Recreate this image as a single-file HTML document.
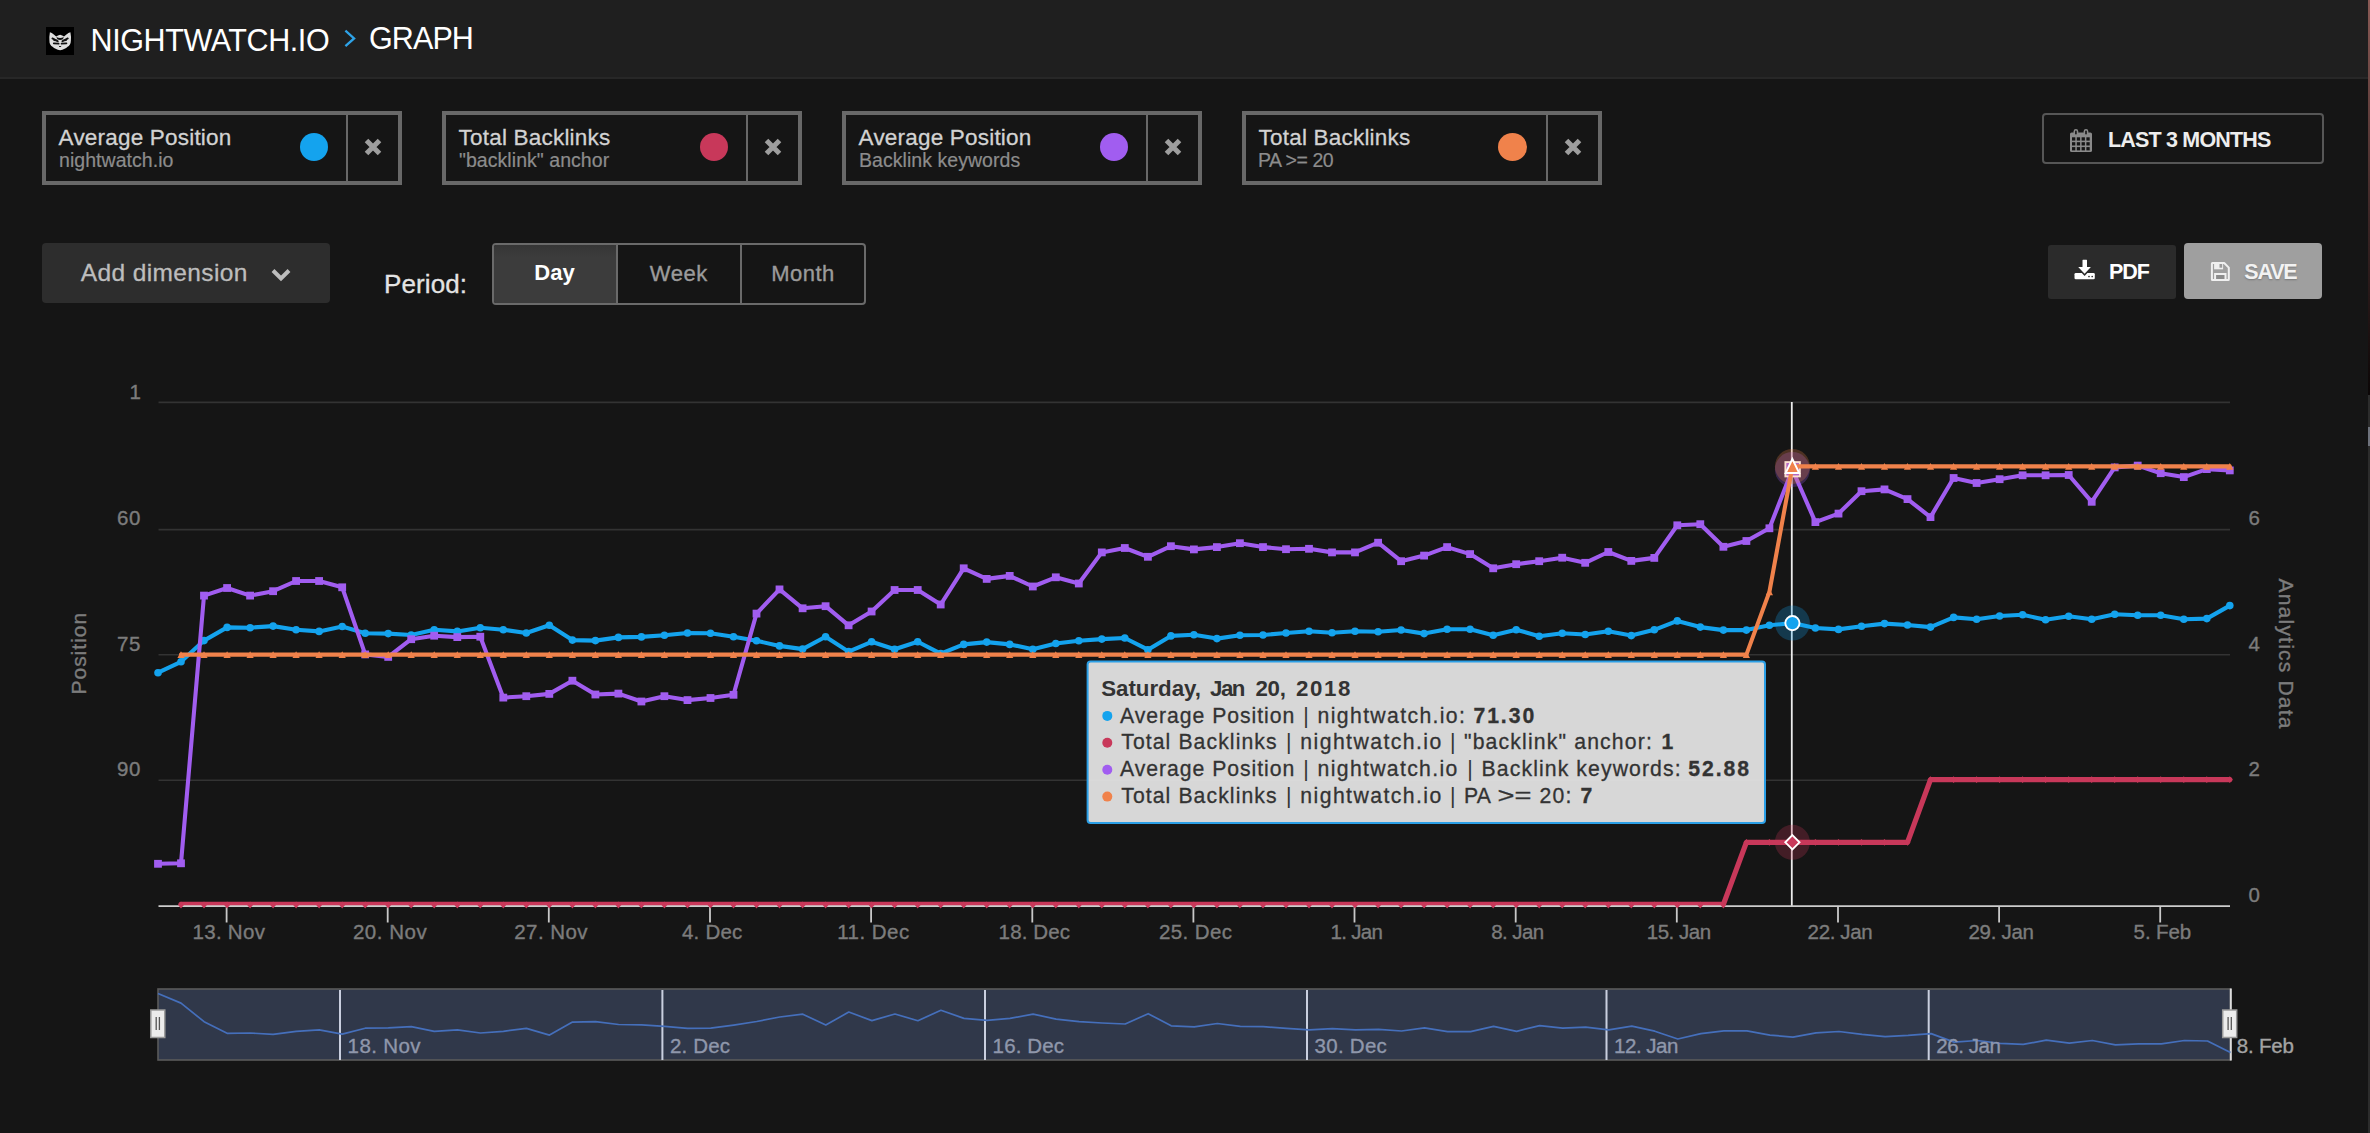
<!DOCTYPE html>
<html><head><meta charset="utf-8"><title>Nightwatch Graph</title>
<style>
html,body{margin:0;padding:0}
body{width:2370px;height:1133px;background:#151515;position:relative;overflow:hidden;font-family:"Liberation Sans",sans-serif;color:#fff}
.abs{position:absolute}
.hdr{left:0;top:0;width:2370px;height:77px;background:#1f1f1f;border-bottom:2px solid #272727}
.t{position:absolute;white-space:nowrap;line-height:1}
.pill{position:absolute;top:111px;width:352px;height:66px;border:4px solid #686868;background:#151515}
.pill .div{position:absolute;left:300px;top:0;width:2px;height:66px;background:#686868}
.pill .dot{position:absolute;left:254px;top:18px;width:28px;height:28px;border-radius:50%}
.pill .a{left:12.6px;top:12px;font-size:22.5px;color:#d2d2d2;letter-spacing:0.2px;-webkit-text-stroke:0.3px #d2d2d2}
.pill .b{left:13px;top:36px;font-size:19.5px;color:#8c8c8c;letter-spacing:0.05px;-webkit-text-stroke:0.2px #8c8c8c}
.pill svg{position:absolute;left:316.9px;top:22px}
</style></head><body>
<div class="abs hdr"></div>
<div class="abs" style="left:46px;top:27px;width:28px;height:28px;background:#000"></div>
<svg class="abs" style="left:46px;top:27px" width="28" height="28" viewBox="0 0 28 28"><path d="M3.9 5.2 Q5.8 5.6 7.8 7.4 L10.2 9.6 Q11.8 8 14.1 7.7 Q16.4 8 18 9.6 L20.4 7.4 Q22.4 5.6 24.4 5.2 Q25.3 9.5 24.9 13.6 Q24.9 16.2 23.8 17.7 Q22.9 19 21.6 19.8 Q20.2 21.2 18.6 21.8 Q16.4 23 14.1 23.3 Q11.8 23 9.6 21.8 Q8 21.2 6.6 19.8 Q5.3 19 4.4 17.7 Q3.3 16.2 3.4 13.6 Q3.1 9.5 3.9 5.2z" fill="#dedede"/><g fill="#111"><path d="M10.4 9.9 Q14.1 12 17.8 9.9 L16.9 12.3 Q14.1 13.7 11.3 12.3z"/></g><g stroke="#111" fill="none" stroke-linecap="round"><path d="M6.4 11.4 L11.8 14.3 M21.8 11.4 L16.4 14.3" stroke-width="1.8"/><path d="M8 13.2 L10.8 13.6 M20.2 13.2 L17.4 13.6" stroke-width="1.5"/><path d="M7.8 16.4 L12.6 16.7 M20.4 16.4 L15.6 16.7" stroke-width="1.8"/><path d="M13.3 19.2 L14.1 20 L14.9 19.2" stroke-width="1"/></g></svg>
<div class="t" id="t1" style="left:90.5px;top:24.5px;font-size:30.5px;letter-spacing:-0.4px">NIGHTWATCH.IO</div>
<svg class="abs" style="left:340px;top:26px" width="20" height="26" viewBox="0 0 20 26"><path d="M5.4 4.6 L14.1 12.4 L5.4 20.2" fill="none" stroke="#2ea3e8" stroke-width="2.3"/></svg>
<div class="t" id="t2" style="left:369px;top:23px;font-size:30.5px;letter-spacing:-0.9px">GRAPH</div>
<div class="pill" style="left:42px"><div class="t a">Average Position</div><div class="t b">nightwatch.io</div><div class="dot" style="background:#14a3ee"></div><div class="div"></div><svg width="20" height="20" viewBox="0 0 20 20"><path d="M3.5 3.5 L16.5 16.5 M16.5 3.5 L3.5 16.5" stroke="#9e9e9e" stroke-width="5" fill="none"/></svg></div>
<div class="pill" style="left:442px"><div class="t a">Total Backlinks</div><div class="t b">"backlink" anchor</div><div class="dot" style="background:#c8385a"></div><div class="div"></div><svg width="20" height="20" viewBox="0 0 20 20"><path d="M3.5 3.5 L16.5 16.5 M16.5 3.5 L3.5 16.5" stroke="#9e9e9e" stroke-width="5" fill="none"/></svg></div>
<div class="pill" style="left:842px"><div class="t a">Average Position</div><div class="t b">Backlink keywords</div><div class="dot" style="background:#a15df0"></div><div class="div"></div><svg width="20" height="20" viewBox="0 0 20 20"><path d="M3.5 3.5 L16.5 16.5 M16.5 3.5 L3.5 16.5" stroke="#9e9e9e" stroke-width="5" fill="none"/></svg></div>
<div class="pill" style="left:1242px"><div class="t a">Total Backlinks</div><div class="t b" style="letter-spacing:-0.45px;left:12px">PA &gt;= 20</div><div class="dot" style="background:#f0824b;left:252.3px;width:29px"></div><div class="div"></div><svg width="20" height="20" viewBox="0 0 20 20"><path d="M3.5 3.5 L16.5 16.5 M16.5 3.5 L3.5 16.5" stroke="#9e9e9e" stroke-width="5" fill="none"/></svg></div>

<div class="abs" style="left:2042px;top:113px;width:278px;height:47px;border:2px solid #565656;border-radius:4px"></div>
<svg class="abs" style="left:2069px;top:128px" width="24" height="26" viewBox="0 0 24 26"><rect x="1" y="4.4" width="22" height="19.6" rx="1.6" fill="#8a8a8a"/><rect x="4.6" y="1" width="4.6" height="6.6" rx="2.2" fill="#8a8a8a"/><rect x="14.7" y="1" width="4.6" height="6.6" rx="2.2" fill="#8a8a8a"/><g fill="#151515"><rect x="6.1" y="2.6" width="1.6" height="4" rx="0.8"/><rect x="16.2" y="2.6" width="1.6" height="4" rx="0.8"/><rect x="3.0" y="9.3" width="3.3" height="3.3"/><rect x="7.8" y="9.3" width="3.3" height="3.3"/><rect x="12.6" y="9.3" width="3.3" height="3.3"/><rect x="17.4" y="9.3" width="3.3" height="3.3"/><rect x="3.0" y="14.2" width="3.3" height="3.3"/><rect x="7.8" y="14.2" width="3.3" height="3.3"/><rect x="12.6" y="14.2" width="3.3" height="3.3"/><rect x="17.4" y="14.2" width="3.3" height="3.3"/><rect x="3.0" y="19.1" width="3.3" height="3.3"/><rect x="7.8" y="19.1" width="3.3" height="3.3"/><rect x="12.6" y="19.1" width="3.3" height="3.3"/><rect x="17.4" y="19.1" width="3.3" height="3.3"/></g></svg>
<div class="t" id="t3" style="left:2108px;top:130.3px;font-size:21.5px;font-weight:bold;color:#ededed;letter-spacing:-0.82px">LAST 3 MONTHS</div>

<div class="abs" style="left:42px;top:243px;width:288px;height:60px;background:#2d2d2d;border-radius:4px"></div>
<div class="t" id="t4" style="left:80.8px;top:260.8px;font-size:24.5px;color:#bdbdbd;letter-spacing:0.38px;-webkit-text-stroke:0.3px #bdbdbd">Add dimension</div>
<svg class="abs" style="left:268px;top:264px" width="26" height="22" viewBox="0 0 26 22"><path d="M5 6.5 L13 14.5 L21 6.5" fill="none" stroke="#bdbdbd" stroke-width="4"/></svg>
<div class="t" id="t5" style="left:384px;top:270.5px;font-size:26px;color:#e3e3e3;letter-spacing:0.1px;-webkit-text-stroke:0.3px #e3e3e3">Period:</div>

<div class="abs" style="left:492px;top:243px;width:370px;height:58px;border:2px solid #6a6a6a;border-radius:4px;background:#151515"></div>
<div class="abs" style="left:494px;top:245px;width:122px;height:58px;background:linear-gradient(#353535,#3c3c3c 12px,#3c3c3c);border-radius:2px 0 0 2px"></div>
<div class="abs" style="left:616px;top:245px;width:2px;height:58px;background:#6a6a6a"></div>
<div class="abs" style="left:740px;top:245px;width:2px;height:58px;background:#6a6a6a"></div>
<div class="t" id="t6" style="left:534.3px;top:262.4px;font-size:22px;font-weight:bold;color:#fff;letter-spacing:0.1px">Day</div>
<div class="t" id="t7" style="left:649.8px;top:263px;font-size:22px;color:#9b9b9b;letter-spacing:0.5px;-webkit-text-stroke:0.35px #9b9b9b">Week</div>
<div class="t" id="t8" style="left:771.3px;top:263px;font-size:22px;color:#9b9b9b;letter-spacing:0.45px;-webkit-text-stroke:0.35px #9b9b9b">Month</div>

<div class="abs" style="left:2048px;top:245px;width:127.5px;height:53.5px;background:#2b2b2b;border-radius:3px"></div>
<svg class="abs" style="left:2073px;top:258px" width="24" height="24" viewBox="0 0 24 24"><rect x="1.5" y="15" width="20.3" height="6.3" rx="1.3" fill="#fff"/><path d="M9.1 2.2 h5.3 v6.9 h3.7 l-6.5 6.9 l-6.6 -6.9 h4.1z" fill="#fff" stroke="#2b2b2b" stroke-width="2.6" stroke-linejoin="miter"/><path d="M9.5 2.2 q0 -0.4 0.4 -0.4 h3.7 q0.4 0 0.4 0.4 v6.9 h3.9 l-6.3 6.7 l-6.4 -6.7 h4.3z" fill="#fff"/><circle cx="16" cy="18.5" r="0.85" fill="#2b2b2b"/><circle cx="19.2" cy="18.5" r="0.85" fill="#2b2b2b"/></svg>
<div class="t" id="t9" style="left:2109px;top:261.7px;font-size:21.5px;font-weight:bold;color:#fff;letter-spacing:-1.1px">PDF</div>

<div class="abs" style="left:2184px;top:243px;width:138px;height:56px;background:#9f9f9f;border-radius:4px"></div>
<svg class="abs" style="left:2209px;top:261px" width="22" height="21" viewBox="0 0 22 21"><path d="M3.4 2 H15.2 L19.8 6.6 V18.5 Q19.8 19 19.3 19 H3.4 Q2.9 19 2.9 18.5 V2.5 Q2.9 2 3.4 2z" fill="none" stroke="#f0f0f0" stroke-width="2" stroke-linejoin="round"/><rect x="5.1" y="2" width="9" height="6.3" fill="#f0f0f0"/><rect x="10.5" y="3" width="2.7" height="3.7" fill="#9a9a9a"/><rect x="6.1" y="13" width="10.4" height="6" fill="#8c8c8c" stroke="#f0f0f0" stroke-width="2"/></svg>
<div class="t" id="t10" style="left:2244.3px;top:261.7px;font-size:21.5px;font-weight:bold;color:#f2f2f2;letter-spacing:-1.2px;text-shadow:0 1px 2px rgba(0,0,0,.25)">SAVE</div>

<div class="abs" style="left:2368px;top:0;width:2px;height:395px;background:linear-gradient(#8a5a55,#3d2626 55%,#0b0606)"></div>
<div class="abs" style="left:2368px;top:395px;width:2px;height:738px;background:#2c2c2c"></div>
<div class="abs" style="left:2368px;top:427px;width:2px;height:19px;background:#6e727c"></div>
<svg width="2370" height="793" viewBox="0 340 2370 793" style="position:absolute;left:0;top:340px" font-family="Liberation Sans, sans-serif">
<path d="M158.5 402.4 H2230" stroke="#333" stroke-width="1.6" fill="none"/>
<path d="M158.5 529.6 H2230" stroke="#333" stroke-width="1.6" fill="none"/>
<path d="M158.5 654.8 H2230" stroke="#333" stroke-width="1.6" fill="none"/>
<path d="M158.5 780.2 H2230" stroke="#333" stroke-width="1.6" fill="none"/>
<path d="M226.6 906 v16.5 M387.7 906 v16.5 M548.8 906 v16.5 M710.0 906 v16.5 M871.1 906 v16.5 M1032.3 906 v16.5 M1193.4 906 v16.5 M1354.5 906 v16.5 M1515.7 906 v16.5 M1676.8 906 v16.5 M1838.0 906 v16.5 M1999.1 906 v16.5 M2160.2 906 v16.5" stroke="#c8c8c8" stroke-width="1.8" fill="none"/>
<text x="192.5" y="939" font-size="20.5" fill="#7c7c7c" stroke="#7c7c7c" stroke-width="0.35" textLength="72.4" lengthAdjust="spacing">13. Nov</text>
<text x="352.9" y="939" font-size="20.5" fill="#7c7c7c" stroke="#7c7c7c" stroke-width="0.35" textLength="73.8" lengthAdjust="spacing">20. Nov</text>
<text x="514.2" y="939" font-size="20.5" fill="#7c7c7c" stroke="#7c7c7c" stroke-width="0.35" textLength="73.4" lengthAdjust="spacing">27. Nov</text>
<text x="681.9" y="939" font-size="20.5" fill="#7c7c7c" stroke="#7c7c7c" stroke-width="0.35" textLength="60.4" lengthAdjust="spacing">4. Dec</text>
<text x="837.2" y="939" font-size="20.5" fill="#7c7c7c" stroke="#7c7c7c" stroke-width="0.35" textLength="72.0" lengthAdjust="spacing">11. Dec</text>
<text x="998.6" y="939" font-size="20.5" fill="#7c7c7c" stroke="#7c7c7c" stroke-width="0.35" textLength="71.5" lengthAdjust="spacing">18. Dec</text>
<text x="1159.1" y="939" font-size="20.5" fill="#7c7c7c" stroke="#7c7c7c" stroke-width="0.35" textLength="72.8" lengthAdjust="spacing">25. Dec</text>
<text x="1330.4" y="939" font-size="20.5" fill="#7c7c7c" stroke="#7c7c7c" stroke-width="0.35" textLength="52.5" lengthAdjust="spacing">1. Jan</text>
<text x="1491.3" y="939" font-size="20.5" fill="#7c7c7c" stroke="#7c7c7c" stroke-width="0.35" textLength="52.9" lengthAdjust="spacing">8. Jan</text>
<text x="1646.7" y="939" font-size="20.5" fill="#7c7c7c" stroke="#7c7c7c" stroke-width="0.35" textLength="64.5" lengthAdjust="spacing">15. Jan</text>
<text x="1807.6" y="939" font-size="20.5" fill="#7c7c7c" stroke="#7c7c7c" stroke-width="0.35" textLength="65.0" lengthAdjust="spacing">22. Jan</text>
<text x="1968.5" y="939" font-size="20.5" fill="#7c7c7c" stroke="#7c7c7c" stroke-width="0.35" textLength="65.4" lengthAdjust="spacing">29. Jan</text>
<text x="2133.6" y="939" font-size="20.5" fill="#7c7c7c" stroke="#7c7c7c" stroke-width="0.35" textLength="57.5" lengthAdjust="spacing">5. Feb</text>
<text x="129.5" y="398.6" font-size="20.5" fill="#7c7c7c" stroke="#7c7c7c" stroke-width="0.35" textLength="11.0" lengthAdjust="spacing">1</text>
<text x="116.9" y="524.8" font-size="20.5" fill="#7c7c7c" stroke="#7c7c7c" stroke-width="0.35" textLength="23.6" lengthAdjust="spacing">60</text>
<text x="116.9" y="650.8" font-size="20.5" fill="#7c7c7c" stroke="#7c7c7c" stroke-width="0.35" textLength="23.6" lengthAdjust="spacing">75</text>
<text x="116.9" y="776.0" font-size="20.5" fill="#7c7c7c" stroke="#7c7c7c" stroke-width="0.35" textLength="23.6" lengthAdjust="spacing">90</text>
<text x="2248.6" y="525.0" font-size="20.5" fill="#7c7c7c" stroke="#7c7c7c" stroke-width="0.35">6</text>
<text x="2248.6" y="651.0" font-size="20.5" fill="#7c7c7c" stroke="#7c7c7c" stroke-width="0.35">4</text>
<text x="2248.6" y="776.0" font-size="20.5" fill="#7c7c7c" stroke="#7c7c7c" stroke-width="0.35">2</text>
<text x="2248.6" y="902.3" font-size="20.5" fill="#7c7c7c" stroke="#7c7c7c" stroke-width="0.35">0</text>
<text transform="translate(85.8 694.5) rotate(-90)" font-size="21" fill="#7c7c7c" stroke="#7c7c7c" stroke-width="0.35" textLength="81.6" lengthAdjust="spacing">Position</text>
<text transform="translate(2279.3 578.5) rotate(90)" font-size="21" fill="#7c7c7c" stroke="#7c7c7c" stroke-width="0.35" textLength="150" lengthAdjust="spacing">Analytics Data</text>
<path d="M1791.8 402 V906" stroke="#ececec" stroke-width="1.8" fill="none"/>
<circle cx="1792.4" cy="623.1" r="17.5" fill="#14a3ee" fill-opacity="0.26"/>
<path d="M158.0 672.7 L181.0 661.8 L204.0 640.6 L227.1 627.4 L250.1 627.7 L273.1 626.1 L296.1 629.7 L319.1 631.4 L342.2 626.5 L365.2 633.2 L388.2 633.6 L411.2 635.0 L434.2 629.7 L457.3 631.4 L480.3 627.7 L503.3 629.7 L526.3 633.0 L549.3 625.3 L572.4 640.1 L595.4 640.6 L618.4 637.4 L641.4 636.9 L664.4 635.3 L687.5 633.0 L710.5 633.2 L733.5 636.7 L756.5 640.8 L779.5 645.9 L802.6 649.1 L825.6 636.7 L848.6 651.6 L871.6 641.8 L894.6 649.3 L917.7 641.7 L940.7 653.6 L963.7 644.4 L986.7 642.1 L1009.7 644.4 L1032.8 649.2 L1055.8 643.5 L1078.8 640.7 L1101.8 639.1 L1124.8 638.0 L1147.9 649.7 L1170.9 635.9 L1193.9 634.7 L1216.9 638.6 L1239.9 635.2 L1263.0 635.0 L1286.0 633.0 L1309.0 631.3 L1332.0 632.7 L1355.0 631.3 L1378.1 631.8 L1401.1 630.0 L1424.1 633.6 L1447.1 629.2 L1470.1 629.2 L1493.2 635.3 L1516.2 629.7 L1539.2 636.2 L1562.2 633.2 L1585.2 634.5 L1608.3 631.3 L1631.3 635.6 L1654.3 629.8 L1677.3 620.9 L1700.3 627.1 L1723.4 630.1 L1746.4 630.1 L1769.4 625.3 L1792.4 623.1 L1815.4 628.0 L1838.5 629.4 L1861.5 626.2 L1884.5 623.6 L1907.5 625.0 L1930.5 627.1 L1953.6 617.4 L1976.6 619.2 L1999.6 616.0 L2022.6 614.8 L2045.6 619.7 L2068.7 616.2 L2091.7 619.2 L2114.7 614.2 L2137.7 615.3 L2160.7 615.3 L2183.8 619.2 L2206.8 618.6 L2229.8 605.6" stroke="#14a3ee" stroke-width="4.1" fill="none" stroke-linejoin="round" stroke-linecap="round"/>
<g fill="#14a3ee"><circle cx="158.0" cy="672.7" r="3.8"/><circle cx="181.0" cy="661.8" r="3.8"/><circle cx="204.0" cy="640.6" r="3.8"/><circle cx="227.1" cy="627.4" r="3.8"/><circle cx="250.1" cy="627.7" r="3.8"/><circle cx="273.1" cy="626.1" r="3.8"/><circle cx="296.1" cy="629.7" r="3.8"/><circle cx="319.1" cy="631.4" r="3.8"/><circle cx="342.2" cy="626.5" r="3.8"/><circle cx="365.2" cy="633.2" r="3.8"/><circle cx="388.2" cy="633.6" r="3.8"/><circle cx="411.2" cy="635.0" r="3.8"/><circle cx="434.2" cy="629.7" r="3.8"/><circle cx="457.3" cy="631.4" r="3.8"/><circle cx="480.3" cy="627.7" r="3.8"/><circle cx="503.3" cy="629.7" r="3.8"/><circle cx="526.3" cy="633.0" r="3.8"/><circle cx="549.3" cy="625.3" r="3.8"/><circle cx="572.4" cy="640.1" r="3.8"/><circle cx="595.4" cy="640.6" r="3.8"/><circle cx="618.4" cy="637.4" r="3.8"/><circle cx="641.4" cy="636.9" r="3.8"/><circle cx="664.4" cy="635.3" r="3.8"/><circle cx="687.5" cy="633.0" r="3.8"/><circle cx="710.5" cy="633.2" r="3.8"/><circle cx="733.5" cy="636.7" r="3.8"/><circle cx="756.5" cy="640.8" r="3.8"/><circle cx="779.5" cy="645.9" r="3.8"/><circle cx="802.6" cy="649.1" r="3.8"/><circle cx="825.6" cy="636.7" r="3.8"/><circle cx="848.6" cy="651.6" r="3.8"/><circle cx="871.6" cy="641.8" r="3.8"/><circle cx="894.6" cy="649.3" r="3.8"/><circle cx="917.7" cy="641.7" r="3.8"/><circle cx="940.7" cy="653.6" r="3.8"/><circle cx="963.7" cy="644.4" r="3.8"/><circle cx="986.7" cy="642.1" r="3.8"/><circle cx="1009.7" cy="644.4" r="3.8"/><circle cx="1032.8" cy="649.2" r="3.8"/><circle cx="1055.8" cy="643.5" r="3.8"/><circle cx="1078.8" cy="640.7" r="3.8"/><circle cx="1101.8" cy="639.1" r="3.8"/><circle cx="1124.8" cy="638.0" r="3.8"/><circle cx="1147.9" cy="649.7" r="3.8"/><circle cx="1170.9" cy="635.9" r="3.8"/><circle cx="1193.9" cy="634.7" r="3.8"/><circle cx="1216.9" cy="638.6" r="3.8"/><circle cx="1239.9" cy="635.2" r="3.8"/><circle cx="1263.0" cy="635.0" r="3.8"/><circle cx="1286.0" cy="633.0" r="3.8"/><circle cx="1309.0" cy="631.3" r="3.8"/><circle cx="1332.0" cy="632.7" r="3.8"/><circle cx="1355.0" cy="631.3" r="3.8"/><circle cx="1378.1" cy="631.8" r="3.8"/><circle cx="1401.1" cy="630.0" r="3.8"/><circle cx="1424.1" cy="633.6" r="3.8"/><circle cx="1447.1" cy="629.2" r="3.8"/><circle cx="1470.1" cy="629.2" r="3.8"/><circle cx="1493.2" cy="635.3" r="3.8"/><circle cx="1516.2" cy="629.7" r="3.8"/><circle cx="1539.2" cy="636.2" r="3.8"/><circle cx="1562.2" cy="633.2" r="3.8"/><circle cx="1585.2" cy="634.5" r="3.8"/><circle cx="1608.3" cy="631.3" r="3.8"/><circle cx="1631.3" cy="635.6" r="3.8"/><circle cx="1654.3" cy="629.8" r="3.8"/><circle cx="1677.3" cy="620.9" r="3.8"/><circle cx="1700.3" cy="627.1" r="3.8"/><circle cx="1723.4" cy="630.1" r="3.8"/><circle cx="1746.4" cy="630.1" r="3.8"/><circle cx="1769.4" cy="625.3" r="3.8"/><circle cx="1815.4" cy="628.0" r="3.8"/><circle cx="1838.5" cy="629.4" r="3.8"/><circle cx="1861.5" cy="626.2" r="3.8"/><circle cx="1884.5" cy="623.6" r="3.8"/><circle cx="1907.5" cy="625.0" r="3.8"/><circle cx="1930.5" cy="627.1" r="3.8"/><circle cx="1953.6" cy="617.4" r="3.8"/><circle cx="1976.6" cy="619.2" r="3.8"/><circle cx="1999.6" cy="616.0" r="3.8"/><circle cx="2022.6" cy="614.8" r="3.8"/><circle cx="2045.6" cy="619.7" r="3.8"/><circle cx="2068.7" cy="616.2" r="3.8"/><circle cx="2091.7" cy="619.2" r="3.8"/><circle cx="2114.7" cy="614.2" r="3.8"/><circle cx="2137.7" cy="615.3" r="3.8"/><circle cx="2160.7" cy="615.3" r="3.8"/><circle cx="2183.8" cy="619.2" r="3.8"/><circle cx="2206.8" cy="618.6" r="3.8"/><circle cx="2229.8" cy="605.6" r="3.8"/></g>
<circle cx="1792.4" cy="623.1" r="7.1" fill="#14a3ee" stroke="#fff" stroke-width="1.9"/>
<circle cx="1792.4" cy="842.3" r="17.5" fill="#c8385a" fill-opacity="0.26"/>
<path d="M181.0 904.3 L204.0 904.3 L227.1 904.3 L250.1 904.3 L273.1 904.3 L296.1 904.3 L319.1 904.3 L342.2 904.3 L365.2 904.3 L388.2 904.3 L411.2 904.3 L434.2 904.3 L457.3 904.3 L480.3 904.3 L503.3 904.3 L526.3 904.3 L549.3 904.3 L572.4 904.3 L595.4 904.3 L618.4 904.3 L641.4 904.3 L664.4 904.3 L687.5 904.3 L710.5 904.3 L733.5 904.3 L756.5 904.3 L779.5 904.3 L802.6 904.3 L825.6 904.3 L848.6 904.3 L871.6 904.3 L894.6 904.3 L917.7 904.3 L940.7 904.3 L963.7 904.3 L986.7 904.3 L1009.7 904.3 L1032.8 904.3 L1055.8 904.3 L1078.8 904.3 L1101.8 904.3 L1124.8 904.3 L1147.9 904.3 L1170.9 904.3 L1193.9 904.3 L1216.9 904.3 L1239.9 904.3 L1263.0 904.3 L1286.0 904.3 L1309.0 904.3 L1332.0 904.3 L1355.0 904.3 L1378.1 904.3 L1401.1 904.3 L1424.1 904.3 L1447.1 904.3 L1470.1 904.3 L1493.2 904.3 L1516.2 904.3 L1539.2 904.3 L1562.2 904.3 L1585.2 904.3 L1608.3 904.3 L1631.3 904.3 L1654.3 904.3 L1677.3 904.3 L1700.3 904.3 L1723.4 904.3 L1746.4 842.3 L1769.4 842.3 L1792.4 842.3 L1815.4 842.3 L1838.5 842.3 L1861.5 842.3 L1884.5 842.3 L1907.5 842.3 L1930.5 779.6 L1953.6 779.6 L1976.6 779.6 L1999.6 779.6 L2022.6 779.6 L2045.6 779.6 L2068.7 779.6 L2091.7 779.6 L2114.7 779.6 L2137.7 779.6 L2160.7 779.6 L2183.8 779.6 L2206.8 779.6 L2229.8 779.6" stroke="#c8385a" stroke-width="5.2" fill="none" stroke-linejoin="round" stroke-linecap="round"/>
<path d="M158.5 906.15 H2230" stroke="#cdcdcd" stroke-width="1.7" fill="none"/>
<g fill="#c8385a"><path d="M181.0 901.6 l2.9 3.4 l-2.9 3.4 l-2.9 -3.4z"/><path d="M204.0 901.6 l2.9 3.4 l-2.9 3.4 l-2.9 -3.4z"/><path d="M227.1 901.6 l2.9 3.4 l-2.9 3.4 l-2.9 -3.4z"/><path d="M250.1 901.6 l2.9 3.4 l-2.9 3.4 l-2.9 -3.4z"/><path d="M273.1 901.6 l2.9 3.4 l-2.9 3.4 l-2.9 -3.4z"/><path d="M296.1 901.6 l2.9 3.4 l-2.9 3.4 l-2.9 -3.4z"/><path d="M319.1 901.6 l2.9 3.4 l-2.9 3.4 l-2.9 -3.4z"/><path d="M342.2 901.6 l2.9 3.4 l-2.9 3.4 l-2.9 -3.4z"/><path d="M365.2 901.6 l2.9 3.4 l-2.9 3.4 l-2.9 -3.4z"/><path d="M388.2 901.6 l2.9 3.4 l-2.9 3.4 l-2.9 -3.4z"/><path d="M411.2 901.6 l2.9 3.4 l-2.9 3.4 l-2.9 -3.4z"/><path d="M434.2 901.6 l2.9 3.4 l-2.9 3.4 l-2.9 -3.4z"/><path d="M457.3 901.6 l2.9 3.4 l-2.9 3.4 l-2.9 -3.4z"/><path d="M480.3 901.6 l2.9 3.4 l-2.9 3.4 l-2.9 -3.4z"/><path d="M503.3 901.6 l2.9 3.4 l-2.9 3.4 l-2.9 -3.4z"/><path d="M526.3 901.6 l2.9 3.4 l-2.9 3.4 l-2.9 -3.4z"/><path d="M549.3 901.6 l2.9 3.4 l-2.9 3.4 l-2.9 -3.4z"/><path d="M572.4 901.6 l2.9 3.4 l-2.9 3.4 l-2.9 -3.4z"/><path d="M595.4 901.6 l2.9 3.4 l-2.9 3.4 l-2.9 -3.4z"/><path d="M618.4 901.6 l2.9 3.4 l-2.9 3.4 l-2.9 -3.4z"/><path d="M641.4 901.6 l2.9 3.4 l-2.9 3.4 l-2.9 -3.4z"/><path d="M664.4 901.6 l2.9 3.4 l-2.9 3.4 l-2.9 -3.4z"/><path d="M687.5 901.6 l2.9 3.4 l-2.9 3.4 l-2.9 -3.4z"/><path d="M710.5 901.6 l2.9 3.4 l-2.9 3.4 l-2.9 -3.4z"/><path d="M733.5 901.6 l2.9 3.4 l-2.9 3.4 l-2.9 -3.4z"/><path d="M756.5 901.6 l2.9 3.4 l-2.9 3.4 l-2.9 -3.4z"/><path d="M779.5 901.6 l2.9 3.4 l-2.9 3.4 l-2.9 -3.4z"/><path d="M802.6 901.6 l2.9 3.4 l-2.9 3.4 l-2.9 -3.4z"/><path d="M825.6 901.6 l2.9 3.4 l-2.9 3.4 l-2.9 -3.4z"/><path d="M848.6 901.6 l2.9 3.4 l-2.9 3.4 l-2.9 -3.4z"/><path d="M871.6 901.6 l2.9 3.4 l-2.9 3.4 l-2.9 -3.4z"/><path d="M894.6 901.6 l2.9 3.4 l-2.9 3.4 l-2.9 -3.4z"/><path d="M917.7 901.6 l2.9 3.4 l-2.9 3.4 l-2.9 -3.4z"/><path d="M940.7 901.6 l2.9 3.4 l-2.9 3.4 l-2.9 -3.4z"/><path d="M963.7 901.6 l2.9 3.4 l-2.9 3.4 l-2.9 -3.4z"/><path d="M986.7 901.6 l2.9 3.4 l-2.9 3.4 l-2.9 -3.4z"/><path d="M1009.7 901.6 l2.9 3.4 l-2.9 3.4 l-2.9 -3.4z"/><path d="M1032.8 901.6 l2.9 3.4 l-2.9 3.4 l-2.9 -3.4z"/><path d="M1055.8 901.6 l2.9 3.4 l-2.9 3.4 l-2.9 -3.4z"/><path d="M1078.8 901.6 l2.9 3.4 l-2.9 3.4 l-2.9 -3.4z"/><path d="M1101.8 901.6 l2.9 3.4 l-2.9 3.4 l-2.9 -3.4z"/><path d="M1124.8 901.6 l2.9 3.4 l-2.9 3.4 l-2.9 -3.4z"/><path d="M1147.9 901.6 l2.9 3.4 l-2.9 3.4 l-2.9 -3.4z"/><path d="M1170.9 901.6 l2.9 3.4 l-2.9 3.4 l-2.9 -3.4z"/><path d="M1193.9 901.6 l2.9 3.4 l-2.9 3.4 l-2.9 -3.4z"/><path d="M1216.9 901.6 l2.9 3.4 l-2.9 3.4 l-2.9 -3.4z"/><path d="M1239.9 901.6 l2.9 3.4 l-2.9 3.4 l-2.9 -3.4z"/><path d="M1263.0 901.6 l2.9 3.4 l-2.9 3.4 l-2.9 -3.4z"/><path d="M1286.0 901.6 l2.9 3.4 l-2.9 3.4 l-2.9 -3.4z"/><path d="M1309.0 901.6 l2.9 3.4 l-2.9 3.4 l-2.9 -3.4z"/><path d="M1332.0 901.6 l2.9 3.4 l-2.9 3.4 l-2.9 -3.4z"/><path d="M1355.0 901.6 l2.9 3.4 l-2.9 3.4 l-2.9 -3.4z"/><path d="M1378.1 901.6 l2.9 3.4 l-2.9 3.4 l-2.9 -3.4z"/><path d="M1401.1 901.6 l2.9 3.4 l-2.9 3.4 l-2.9 -3.4z"/><path d="M1424.1 901.6 l2.9 3.4 l-2.9 3.4 l-2.9 -3.4z"/><path d="M1447.1 901.6 l2.9 3.4 l-2.9 3.4 l-2.9 -3.4z"/><path d="M1470.1 901.6 l2.9 3.4 l-2.9 3.4 l-2.9 -3.4z"/><path d="M1493.2 901.6 l2.9 3.4 l-2.9 3.4 l-2.9 -3.4z"/><path d="M1516.2 901.6 l2.9 3.4 l-2.9 3.4 l-2.9 -3.4z"/><path d="M1539.2 901.6 l2.9 3.4 l-2.9 3.4 l-2.9 -3.4z"/><path d="M1562.2 901.6 l2.9 3.4 l-2.9 3.4 l-2.9 -3.4z"/><path d="M1585.2 901.6 l2.9 3.4 l-2.9 3.4 l-2.9 -3.4z"/><path d="M1608.3 901.6 l2.9 3.4 l-2.9 3.4 l-2.9 -3.4z"/><path d="M1631.3 901.6 l2.9 3.4 l-2.9 3.4 l-2.9 -3.4z"/><path d="M1654.3 901.6 l2.9 3.4 l-2.9 3.4 l-2.9 -3.4z"/><path d="M1677.3 901.6 l2.9 3.4 l-2.9 3.4 l-2.9 -3.4z"/><path d="M1700.3 901.6 l2.9 3.4 l-2.9 3.4 l-2.9 -3.4z"/><path d="M1723.4 901.6 l2.9 3.4 l-2.9 3.4 l-2.9 -3.4z"/><path d="M1746.4 838.9 l2.9 3.4 l-2.9 3.4 l-2.9 -3.4z"/><path d="M1769.4 838.9 l2.9 3.4 l-2.9 3.4 l-2.9 -3.4z"/><path d="M1815.4 838.9 l2.9 3.4 l-2.9 3.4 l-2.9 -3.4z"/><path d="M1838.5 838.9 l2.9 3.4 l-2.9 3.4 l-2.9 -3.4z"/><path d="M1861.5 838.9 l2.9 3.4 l-2.9 3.4 l-2.9 -3.4z"/><path d="M1884.5 838.9 l2.9 3.4 l-2.9 3.4 l-2.9 -3.4z"/><path d="M1907.5 838.9 l2.9 3.4 l-2.9 3.4 l-2.9 -3.4z"/><path d="M1930.5 776.2 l2.9 3.4 l-2.9 3.4 l-2.9 -3.4z"/><path d="M1953.6 776.2 l2.9 3.4 l-2.9 3.4 l-2.9 -3.4z"/><path d="M1976.6 776.2 l2.9 3.4 l-2.9 3.4 l-2.9 -3.4z"/><path d="M1999.6 776.2 l2.9 3.4 l-2.9 3.4 l-2.9 -3.4z"/><path d="M2022.6 776.2 l2.9 3.4 l-2.9 3.4 l-2.9 -3.4z"/><path d="M2045.6 776.2 l2.9 3.4 l-2.9 3.4 l-2.9 -3.4z"/><path d="M2068.7 776.2 l2.9 3.4 l-2.9 3.4 l-2.9 -3.4z"/><path d="M2091.7 776.2 l2.9 3.4 l-2.9 3.4 l-2.9 -3.4z"/><path d="M2114.7 776.2 l2.9 3.4 l-2.9 3.4 l-2.9 -3.4z"/><path d="M2137.7 776.2 l2.9 3.4 l-2.9 3.4 l-2.9 -3.4z"/><path d="M2160.7 776.2 l2.9 3.4 l-2.9 3.4 l-2.9 -3.4z"/><path d="M2183.8 776.2 l2.9 3.4 l-2.9 3.4 l-2.9 -3.4z"/><path d="M2206.8 776.2 l2.9 3.4 l-2.9 3.4 l-2.9 -3.4z"/><path d="M2229.8 776.2 l2.9 3.4 l-2.9 3.4 l-2.9 -3.4z"/></g>
<path d="M1792.4 835.1 l7.1 7.2 l-7.1 7.2 l-7.1 -7.2z" fill="#c8385a" stroke="#fff" stroke-width="1.9"/>
<circle cx="1792.4" cy="469.5" r="17.5" fill="#a15df0" fill-opacity="0.26"/>
<path d="M158.0 863.8 L181.0 863.3 L204.0 595.6 L227.1 588.0 L250.1 595.6 L273.1 591.2 L296.1 581.0 L319.1 581.0 L342.2 587.3 L365.2 654.4 L388.2 656.9 L411.2 639.2 L434.2 635.7 L457.3 637.1 L480.3 636.7 L503.3 697.6 L526.3 696.2 L549.3 693.9 L572.4 680.7 L595.4 694.5 L618.4 693.6 L641.4 701.5 L664.4 696.2 L687.5 700.1 L710.5 698.0 L733.5 694.8 L756.5 613.6 L779.5 589.4 L802.6 608.3 L825.6 606.2 L848.6 625.3 L871.6 611.5 L894.6 590.0 L917.7 590.0 L940.7 604.5 L963.7 568.3 L986.7 578.9 L1009.7 575.9 L1032.8 586.5 L1055.8 577.3 L1078.8 583.5 L1101.8 552.4 L1124.8 548.0 L1147.9 556.8 L1170.9 546.2 L1193.9 549.4 L1216.9 547.1 L1239.9 543.2 L1263.0 547.1 L1286.0 549.2 L1309.0 548.8 L1332.0 552.4 L1355.0 552.4 L1378.1 542.7 L1401.1 561.2 L1424.1 555.6 L1447.1 547.1 L1470.1 554.1 L1493.2 568.3 L1516.2 564.2 L1539.2 561.2 L1562.2 557.7 L1585.2 562.8 L1608.3 552.0 L1631.3 560.9 L1654.3 557.9 L1677.3 525.3 L1700.3 524.2 L1723.4 546.8 L1746.4 541.0 L1769.4 528.3 L1792.4 469.5 L1815.4 522.1 L1838.5 513.6 L1861.5 491.2 L1884.5 489.4 L1907.5 499.1 L1930.5 517.1 L1953.6 478.0 L1976.6 483.0 L1999.6 479.2 L2022.6 475.3 L2045.6 475.3 L2068.7 475.0 L2091.7 501.8 L2114.7 467.4 L2137.7 465.6 L2160.7 473.2 L2183.8 477.1 L2206.8 469.1 L2229.8 470.4" stroke="#a15df0" stroke-width="4.1" fill="none" stroke-linejoin="round" stroke-linecap="round"/>
<g fill="#a15df0"><rect x="154.1" y="859.9" width="7.8" height="7.8"/><rect x="177.1" y="859.4" width="7.8" height="7.8"/><rect x="200.1" y="591.7" width="7.8" height="7.8"/><rect x="223.2" y="584.1" width="7.8" height="7.8"/><rect x="246.2" y="591.7" width="7.8" height="7.8"/><rect x="269.2" y="587.3" width="7.8" height="7.8"/><rect x="292.2" y="577.1" width="7.8" height="7.8"/><rect x="315.2" y="577.1" width="7.8" height="7.8"/><rect x="338.3" y="583.4" width="7.8" height="7.8"/><rect x="361.3" y="650.5" width="7.8" height="7.8"/><rect x="384.3" y="653.0" width="7.8" height="7.8"/><rect x="407.3" y="635.3" width="7.8" height="7.8"/><rect x="430.3" y="631.8" width="7.8" height="7.8"/><rect x="453.4" y="633.2" width="7.8" height="7.8"/><rect x="476.4" y="632.8" width="7.8" height="7.8"/><rect x="499.4" y="693.7" width="7.8" height="7.8"/><rect x="522.4" y="692.3" width="7.8" height="7.8"/><rect x="545.4" y="690.0" width="7.8" height="7.8"/><rect x="568.5" y="676.8" width="7.8" height="7.8"/><rect x="591.5" y="690.6" width="7.8" height="7.8"/><rect x="614.5" y="689.7" width="7.8" height="7.8"/><rect x="637.5" y="697.6" width="7.8" height="7.8"/><rect x="660.5" y="692.3" width="7.8" height="7.8"/><rect x="683.6" y="696.2" width="7.8" height="7.8"/><rect x="706.6" y="694.1" width="7.8" height="7.8"/><rect x="729.6" y="690.9" width="7.8" height="7.8"/><rect x="752.6" y="609.7" width="7.8" height="7.8"/><rect x="775.6" y="585.5" width="7.8" height="7.8"/><rect x="798.7" y="604.4" width="7.8" height="7.8"/><rect x="821.7" y="602.3" width="7.8" height="7.8"/><rect x="844.7" y="621.4" width="7.8" height="7.8"/><rect x="867.7" y="607.6" width="7.8" height="7.8"/><rect x="890.7" y="586.1" width="7.8" height="7.8"/><rect x="913.8" y="586.1" width="7.8" height="7.8"/><rect x="936.8" y="600.6" width="7.8" height="7.8"/><rect x="959.8" y="564.4" width="7.8" height="7.8"/><rect x="982.8" y="575.0" width="7.8" height="7.8"/><rect x="1005.8" y="572.0" width="7.8" height="7.8"/><rect x="1028.9" y="582.6" width="7.8" height="7.8"/><rect x="1051.9" y="573.4" width="7.8" height="7.8"/><rect x="1074.9" y="579.6" width="7.8" height="7.8"/><rect x="1097.9" y="548.5" width="7.8" height="7.8"/><rect x="1120.9" y="544.1" width="7.8" height="7.8"/><rect x="1144.0" y="552.9" width="7.8" height="7.8"/><rect x="1167.0" y="542.3" width="7.8" height="7.8"/><rect x="1190.0" y="545.5" width="7.8" height="7.8"/><rect x="1213.0" y="543.2" width="7.8" height="7.8"/><rect x="1236.0" y="539.3" width="7.8" height="7.8"/><rect x="1259.1" y="543.2" width="7.8" height="7.8"/><rect x="1282.1" y="545.3" width="7.8" height="7.8"/><rect x="1305.1" y="544.9" width="7.8" height="7.8"/><rect x="1328.1" y="548.5" width="7.8" height="7.8"/><rect x="1351.1" y="548.5" width="7.8" height="7.8"/><rect x="1374.2" y="538.8" width="7.8" height="7.8"/><rect x="1397.2" y="557.3" width="7.8" height="7.8"/><rect x="1420.2" y="551.7" width="7.8" height="7.8"/><rect x="1443.2" y="543.2" width="7.8" height="7.8"/><rect x="1466.2" y="550.2" width="7.8" height="7.8"/><rect x="1489.3" y="564.4" width="7.8" height="7.8"/><rect x="1512.3" y="560.3" width="7.8" height="7.8"/><rect x="1535.3" y="557.3" width="7.8" height="7.8"/><rect x="1558.3" y="553.8" width="7.8" height="7.8"/><rect x="1581.3" y="558.9" width="7.8" height="7.8"/><rect x="1604.4" y="548.1" width="7.8" height="7.8"/><rect x="1627.4" y="557.0" width="7.8" height="7.8"/><rect x="1650.4" y="554.0" width="7.8" height="7.8"/><rect x="1673.4" y="521.4" width="7.8" height="7.8"/><rect x="1696.4" y="520.3" width="7.8" height="7.8"/><rect x="1719.5" y="542.9" width="7.8" height="7.8"/><rect x="1742.5" y="537.1" width="7.8" height="7.8"/><rect x="1765.5" y="524.4" width="7.8" height="7.8"/><rect x="1811.5" y="518.2" width="7.8" height="7.8"/><rect x="1834.6" y="509.7" width="7.8" height="7.8"/><rect x="1857.6" y="487.3" width="7.8" height="7.8"/><rect x="1880.6" y="485.5" width="7.8" height="7.8"/><rect x="1903.6" y="495.2" width="7.8" height="7.8"/><rect x="1926.6" y="513.2" width="7.8" height="7.8"/><rect x="1949.7" y="474.1" width="7.8" height="7.8"/><rect x="1972.7" y="479.1" width="7.8" height="7.8"/><rect x="1995.7" y="475.3" width="7.8" height="7.8"/><rect x="2018.7" y="471.4" width="7.8" height="7.8"/><rect x="2041.7" y="471.4" width="7.8" height="7.8"/><rect x="2064.8" y="471.1" width="7.8" height="7.8"/><rect x="2087.8" y="497.9" width="7.8" height="7.8"/><rect x="2110.8" y="463.5" width="7.8" height="7.8"/><rect x="2133.8" y="461.7" width="7.8" height="7.8"/><rect x="2156.8" y="469.3" width="7.8" height="7.8"/><rect x="2179.9" y="473.2" width="7.8" height="7.8"/><rect x="2202.9" y="465.2" width="7.8" height="7.8"/><rect x="2225.9" y="466.5" width="7.8" height="7.8"/></g>
<rect x="1785.4" y="462.1" width="14.5" height="14.3" fill="#a15df0" stroke="#fff" stroke-width="1.9"/>
<circle cx="1792.4" cy="466.4" r="17.5" fill="#f0824b" fill-opacity="0.26"/>
<path d="M181.0 654.6 L204.0 654.6 L227.1 654.6 L250.1 654.6 L273.1 654.6 L296.1 654.6 L319.1 654.6 L342.2 654.6 L365.2 654.6 L388.2 654.6 L411.2 654.6 L434.2 654.6 L457.3 654.6 L480.3 654.6 L503.3 654.6 L526.3 654.6 L549.3 654.6 L572.4 654.6 L595.4 654.6 L618.4 654.6 L641.4 654.6 L664.4 654.6 L687.5 654.6 L710.5 654.6 L733.5 654.6 L756.5 654.6 L779.5 654.6 L802.6 654.6 L825.6 654.6 L848.6 654.6 L871.6 654.6 L894.6 654.6 L917.7 654.6 L940.7 654.6 L963.7 654.6 L986.7 654.6 L1009.7 654.6 L1032.8 654.6 L1055.8 654.6 L1078.8 654.6 L1101.8 654.6 L1124.8 654.6 L1147.9 654.6 L1170.9 654.6 L1193.9 654.6 L1216.9 654.6 L1239.9 654.6 L1263.0 654.6 L1286.0 654.6 L1309.0 654.6 L1332.0 654.6 L1355.0 654.6 L1378.1 654.6 L1401.1 654.6 L1424.1 654.6 L1447.1 654.6 L1470.1 654.6 L1493.2 654.6 L1516.2 654.6 L1539.2 654.6 L1562.2 654.6 L1585.2 654.6 L1608.3 654.6 L1631.3 654.6 L1654.3 654.6 L1677.3 654.6 L1700.3 654.6 L1723.4 654.6 L1746.4 654.6 L1769.4 591.9 L1792.4 466.4 L1815.4 466.4 L1838.5 466.4 L1861.5 466.4 L1884.5 466.4 L1907.5 466.4 L1930.5 466.4 L1953.6 466.4 L1976.6 466.4 L1999.6 466.4 L2022.6 466.4 L2045.6 466.4 L2068.7 466.4 L2091.7 466.4 L2114.7 466.4 L2137.7 466.4 L2160.7 466.4 L2183.8 466.4 L2206.8 466.4 L2229.8 466.4" stroke="#f0824b" stroke-width="4.1" fill="none" stroke-linejoin="round" stroke-linecap="round"/>
<g fill="#f0824b"><path d="M181.0 651.2 l3.6 6.8 h-7.2z"/><path d="M204.0 651.2 l3.6 6.8 h-7.2z"/><path d="M227.1 651.2 l3.6 6.8 h-7.2z"/><path d="M250.1 651.2 l3.6 6.8 h-7.2z"/><path d="M273.1 651.2 l3.6 6.8 h-7.2z"/><path d="M296.1 651.2 l3.6 6.8 h-7.2z"/><path d="M319.1 651.2 l3.6 6.8 h-7.2z"/><path d="M342.2 651.2 l3.6 6.8 h-7.2z"/><path d="M365.2 651.2 l3.6 6.8 h-7.2z"/><path d="M388.2 651.2 l3.6 6.8 h-7.2z"/><path d="M411.2 651.2 l3.6 6.8 h-7.2z"/><path d="M434.2 651.2 l3.6 6.8 h-7.2z"/><path d="M457.3 651.2 l3.6 6.8 h-7.2z"/><path d="M480.3 651.2 l3.6 6.8 h-7.2z"/><path d="M503.3 651.2 l3.6 6.8 h-7.2z"/><path d="M526.3 651.2 l3.6 6.8 h-7.2z"/><path d="M549.3 651.2 l3.6 6.8 h-7.2z"/><path d="M572.4 651.2 l3.6 6.8 h-7.2z"/><path d="M595.4 651.2 l3.6 6.8 h-7.2z"/><path d="M618.4 651.2 l3.6 6.8 h-7.2z"/><path d="M641.4 651.2 l3.6 6.8 h-7.2z"/><path d="M664.4 651.2 l3.6 6.8 h-7.2z"/><path d="M687.5 651.2 l3.6 6.8 h-7.2z"/><path d="M710.5 651.2 l3.6 6.8 h-7.2z"/><path d="M733.5 651.2 l3.6 6.8 h-7.2z"/><path d="M756.5 651.2 l3.6 6.8 h-7.2z"/><path d="M779.5 651.2 l3.6 6.8 h-7.2z"/><path d="M802.6 651.2 l3.6 6.8 h-7.2z"/><path d="M825.6 651.2 l3.6 6.8 h-7.2z"/><path d="M848.6 651.2 l3.6 6.8 h-7.2z"/><path d="M871.6 651.2 l3.6 6.8 h-7.2z"/><path d="M894.6 651.2 l3.6 6.8 h-7.2z"/><path d="M917.7 651.2 l3.6 6.8 h-7.2z"/><path d="M940.7 651.2 l3.6 6.8 h-7.2z"/><path d="M963.7 651.2 l3.6 6.8 h-7.2z"/><path d="M986.7 651.2 l3.6 6.8 h-7.2z"/><path d="M1009.7 651.2 l3.6 6.8 h-7.2z"/><path d="M1032.8 651.2 l3.6 6.8 h-7.2z"/><path d="M1055.8 651.2 l3.6 6.8 h-7.2z"/><path d="M1078.8 651.2 l3.6 6.8 h-7.2z"/><path d="M1101.8 651.2 l3.6 6.8 h-7.2z"/><path d="M1124.8 651.2 l3.6 6.8 h-7.2z"/><path d="M1147.9 651.2 l3.6 6.8 h-7.2z"/><path d="M1170.9 651.2 l3.6 6.8 h-7.2z"/><path d="M1193.9 651.2 l3.6 6.8 h-7.2z"/><path d="M1216.9 651.2 l3.6 6.8 h-7.2z"/><path d="M1239.9 651.2 l3.6 6.8 h-7.2z"/><path d="M1263.0 651.2 l3.6 6.8 h-7.2z"/><path d="M1286.0 651.2 l3.6 6.8 h-7.2z"/><path d="M1309.0 651.2 l3.6 6.8 h-7.2z"/><path d="M1332.0 651.2 l3.6 6.8 h-7.2z"/><path d="M1355.0 651.2 l3.6 6.8 h-7.2z"/><path d="M1378.1 651.2 l3.6 6.8 h-7.2z"/><path d="M1401.1 651.2 l3.6 6.8 h-7.2z"/><path d="M1424.1 651.2 l3.6 6.8 h-7.2z"/><path d="M1447.1 651.2 l3.6 6.8 h-7.2z"/><path d="M1470.1 651.2 l3.6 6.8 h-7.2z"/><path d="M1493.2 651.2 l3.6 6.8 h-7.2z"/><path d="M1516.2 651.2 l3.6 6.8 h-7.2z"/><path d="M1539.2 651.2 l3.6 6.8 h-7.2z"/><path d="M1562.2 651.2 l3.6 6.8 h-7.2z"/><path d="M1585.2 651.2 l3.6 6.8 h-7.2z"/><path d="M1608.3 651.2 l3.6 6.8 h-7.2z"/><path d="M1631.3 651.2 l3.6 6.8 h-7.2z"/><path d="M1654.3 651.2 l3.6 6.8 h-7.2z"/><path d="M1677.3 651.2 l3.6 6.8 h-7.2z"/><path d="M1700.3 651.2 l3.6 6.8 h-7.2z"/><path d="M1723.4 651.2 l3.6 6.8 h-7.2z"/><path d="M1746.4 651.2 l3.6 6.8 h-7.2z"/><path d="M1769.4 588.5 l3.6 6.8 h-7.2z"/><path d="M1815.4 463.0 l3.6 6.8 h-7.2z"/><path d="M1838.5 463.0 l3.6 6.8 h-7.2z"/><path d="M1861.5 463.0 l3.6 6.8 h-7.2z"/><path d="M1884.5 463.0 l3.6 6.8 h-7.2z"/><path d="M1907.5 463.0 l3.6 6.8 h-7.2z"/><path d="M1930.5 463.0 l3.6 6.8 h-7.2z"/><path d="M1953.6 463.0 l3.6 6.8 h-7.2z"/><path d="M1976.6 463.0 l3.6 6.8 h-7.2z"/><path d="M1999.6 463.0 l3.6 6.8 h-7.2z"/><path d="M2022.6 463.0 l3.6 6.8 h-7.2z"/><path d="M2045.6 463.0 l3.6 6.8 h-7.2z"/><path d="M2068.7 463.0 l3.6 6.8 h-7.2z"/><path d="M2091.7 463.0 l3.6 6.8 h-7.2z"/><path d="M2114.7 463.0 l3.6 6.8 h-7.2z"/><path d="M2137.7 463.0 l3.6 6.8 h-7.2z"/><path d="M2160.7 463.0 l3.6 6.8 h-7.2z"/><path d="M2183.8 463.0 l3.6 6.8 h-7.2z"/><path d="M2206.8 463.0 l3.6 6.8 h-7.2z"/><path d="M2229.8 463.0 l3.6 6.8 h-7.2z"/></g>
<path d="M1792.4 459.0 l6.8 14 h-13.6z" fill="#f0824b" stroke="#fff" stroke-width="1.9" stroke-linejoin="miter"/>
<rect x="1087.6" y="661.6" width="677.4" height="161.4" rx="3" fill="#e0e0e0" fill-opacity="0.96" stroke="#2b9fe6" stroke-width="2"/>
<text x="1101.2" y="695.8" font-size="22.3" font-weight="bold" fill="#333" textLength="99.8" lengthAdjust="spacing">Saturday,</text>
<text x="1210.0" y="695.8" font-size="22.3" font-weight="bold" fill="#333" textLength="35.4" lengthAdjust="spacing">Jan</text>
<text x="1255.4" y="695.8" font-size="22.3" font-weight="bold" fill="#333" textLength="30.6" lengthAdjust="spacing">20,</text>
<text x="1296.0" y="695.8" font-size="22.3" font-weight="bold" fill="#333" textLength="54.5" lengthAdjust="spacing">2018</text>
<circle cx="1107.3" cy="715.9" r="5" fill="#14a3ee"/>
<text x="1120.1" y="722.5" font-size="21.2" fill="#333" stroke="#333" stroke-width="0.3" textLength="174.1" lengthAdjust="spacing" xml:space="preserve">Average Position</text>
<text x="1306.0" y="722.5" font-size="21.2" fill="#333" text-anchor="middle">|</text>
<text x="1317.6" y="722.5" font-size="21.2" fill="#333" stroke="#333" stroke-width="0.3" textLength="147.3" lengthAdjust="spacing" xml:space="preserve">nightwatch.io:</text>
<text x="1473.4" y="722.5" font-size="21.2" fill="#333" stroke="#333" stroke-width="0.3" font-weight="bold" textLength="60.8" lengthAdjust="spacing" xml:space="preserve">71.30</text>
<circle cx="1107.3" cy="742.8" r="5" fill="#c8385a"/>
<text x="1121.2" y="749.4" font-size="21.2" fill="#333" stroke="#333" stroke-width="0.3" textLength="155.4" lengthAdjust="spacing" xml:space="preserve">Total Backlinks</text>
<text x="1288.7" y="749.4" font-size="21.2" fill="#333" text-anchor="middle">|</text>
<text x="1300.3" y="749.4" font-size="21.2" fill="#333" stroke="#333" stroke-width="0.3" textLength="140.9" lengthAdjust="spacing" xml:space="preserve">nightwatch.io</text>
<text x="1452.8" y="749.4" font-size="21.2" fill="#333" text-anchor="middle">|</text>
<text x="1464.0" y="749.4" font-size="21.2" fill="#333" stroke="#333" stroke-width="0.3" textLength="187.8" lengthAdjust="spacing" xml:space="preserve">"backlink" anchor:</text>
<text x="1661.5" y="749.4" font-size="21.2" fill="#333" stroke="#333" stroke-width="0.3" font-weight="bold" textLength="10.9" lengthAdjust="spacing" xml:space="preserve">1</text>
<circle cx="1107.3" cy="769.7" r="5" fill="#a15df0"/>
<text x="1120.1" y="776.3" font-size="21.2" fill="#333" stroke="#333" stroke-width="0.3" textLength="174.1" lengthAdjust="spacing" xml:space="preserve">Average Position</text>
<text x="1306.0" y="776.3" font-size="21.2" fill="#333" text-anchor="middle">|</text>
<text x="1317.6" y="776.3" font-size="21.2" fill="#333" stroke="#333" stroke-width="0.3" textLength="139.7" lengthAdjust="spacing" xml:space="preserve">nightwatch.io</text>
<text x="1470.1" y="776.3" font-size="21.2" fill="#333" text-anchor="middle">|</text>
<text x="1481.6" y="776.3" font-size="21.2" fill="#333" stroke="#333" stroke-width="0.3" textLength="199.0" lengthAdjust="spacing" xml:space="preserve">Backlink keywords:</text>
<text x="1688.2" y="776.3" font-size="21.2" fill="#333" stroke="#333" stroke-width="0.3" font-weight="bold" textLength="60.8" lengthAdjust="spacing" xml:space="preserve">52.88</text>
<circle cx="1107.3" cy="796.6" r="5" fill="#f0824b"/>
<text x="1121.2" y="803.2" font-size="21.2" fill="#333" stroke="#333" stroke-width="0.3" textLength="155.4" lengthAdjust="spacing" xml:space="preserve">Total Backlinks</text>
<text x="1288.7" y="803.2" font-size="21.2" fill="#333" text-anchor="middle">|</text>
<text x="1300.3" y="803.2" font-size="21.2" fill="#333" stroke="#333" stroke-width="0.3" textLength="140.9" lengthAdjust="spacing" xml:space="preserve">nightwatch.io</text>
<text x="1452.8" y="803.2" font-size="21.2" fill="#333" text-anchor="middle">|</text>
<text x="1464.0" y="803.2" font-size="21.2" fill="#333" stroke="#333" stroke-width="0.3" textLength="26.8" lengthAdjust="spacing" xml:space="preserve">PA</text>
<text x="1497.5" y="803.2" font-size="21.2" fill="#333" stroke="#333" stroke-width="0.3" textLength="33.9" lengthAdjust="spacingAndGlyphs" xml:space="preserve">&gt;=</text>
<text x="1539.4" y="803.2" font-size="21.2" fill="#333" stroke="#333" stroke-width="0.3" textLength="31.9" lengthAdjust="spacing" xml:space="preserve">20:</text>
<text x="1580.6" y="803.2" font-size="21.2" fill="#333" stroke="#333" stroke-width="0.3" font-weight="bold" textLength="12.2" lengthAdjust="spacing" xml:space="preserve">7</text>
<rect x="158" y="989" width="2072.5" height="71" fill="#30384a" stroke="#5a5a5a" stroke-width="1.6"/>
<path d="M340.0 990 V1060 M662.4 990 V1060 M985.0 990 V1060 M1307.0 990 V1060 M1606.5 990 V1060 M1928.7 990 V1060" stroke="#c9cfdf" stroke-width="2" fill="none"/>
<path d="M2230.8 988.5 V1060.5" stroke="#dcdcdc" stroke-width="2" fill="none"/>
<path d="M158.0 993.5 L181.0 1003.1 L204.1 1021.7 L227.1 1033.3 L250.1 1033.0 L273.1 1034.4 L296.2 1031.3 L319.2 1029.8 L342.2 1034.1 L365.2 1028.2 L388.3 1027.9 L411.3 1026.6 L434.3 1031.3 L457.4 1029.8 L480.4 1033.0 L503.4 1031.3 L526.4 1028.4 L549.5 1035.1 L572.5 1022.1 L595.5 1021.7 L618.6 1024.5 L641.6 1024.9 L664.6 1026.4 L687.6 1028.4 L710.7 1028.2 L733.7 1025.1 L756.7 1021.5 L779.8 1017.0 L802.8 1014.2 L825.8 1025.1 L848.8 1012.0 L871.9 1020.6 L894.9 1014.0 L917.9 1020.7 L940.9 1010.3 L964.0 1018.4 L987.0 1020.4 L1010.0 1018.4 L1033.1 1014.1 L1056.1 1019.1 L1079.1 1021.6 L1102.1 1023.0 L1125.2 1024.0 L1148.2 1013.7 L1171.2 1025.8 L1194.2 1026.9 L1217.3 1023.5 L1240.3 1026.4 L1263.3 1026.6 L1286.4 1028.4 L1309.4 1029.9 L1332.4 1028.6 L1355.4 1029.9 L1378.5 1029.4 L1401.5 1031.0 L1424.5 1027.9 L1447.6 1031.7 L1470.6 1031.7 L1493.6 1026.4 L1516.6 1031.3 L1539.7 1025.6 L1562.7 1028.2 L1585.7 1027.1 L1608.8 1029.9 L1631.8 1026.1 L1654.8 1031.2 L1677.8 1039.0 L1700.9 1033.6 L1723.9 1030.9 L1746.9 1030.9 L1769.9 1035.1 L1793.0 1037.1 L1816.0 1032.8 L1839.0 1031.5 L1862.1 1034.4 L1885.1 1036.6 L1908.1 1035.4 L1931.1 1033.6 L1954.2 1042.1 L1977.2 1040.5 L2000.2 1043.3 L2023.2 1044.4 L2046.3 1040.1 L2069.3 1043.1 L2092.3 1040.5 L2115.4 1044.9 L2138.4 1043.9 L2161.4 1043.9 L2184.4 1040.5 L2207.5 1041.0 L2230.5 1052.5" stroke="#456fbb" stroke-width="1.7" fill="none" stroke-linejoin="round"/>
<text x="347.6" y="1053.3" font-size="20.5" fill="#8f97ab" stroke="#8f97ab" stroke-width="0.35" textLength="73.0" lengthAdjust="spacing">18. Nov</text>
<text x="670.0" y="1053.3" font-size="20.5" fill="#8f97ab" stroke="#8f97ab" stroke-width="0.35" textLength="60.0" lengthAdjust="spacing">2. Dec</text>
<text x="992.6" y="1053.3" font-size="20.5" fill="#8f97ab" stroke="#8f97ab" stroke-width="0.35" textLength="71.5" lengthAdjust="spacing">16. Dec</text>
<text x="1314.6" y="1053.3" font-size="20.5" fill="#8f97ab" stroke="#8f97ab" stroke-width="0.35" textLength="72.2" lengthAdjust="spacing">30. Dec</text>
<text x="1614.1" y="1053.3" font-size="20.5" fill="#8f97ab" stroke="#8f97ab" stroke-width="0.35" textLength="64.3" lengthAdjust="spacing">12. Jan</text>
<text x="1936.3" y="1053.3" font-size="20.5" fill="#8f97ab" stroke="#8f97ab" stroke-width="0.35" textLength="64.6" lengthAdjust="spacing">26. Jan</text>
<text x="2236.8" y="1053.3" font-size="20.5" fill="#a3a3a3" stroke="#a3a3a3" stroke-width="0.35" textLength="57" lengthAdjust="spacing">8. Feb</text>
<rect x="150.8" y="1010" width="14" height="27.5" fill="#ececec" stroke="#9a9a9a" stroke-width="1.5"/>
<path d="M156.2 1017 v13 M159.4 1017 v13" stroke="#555" stroke-width="1.3" fill="none"/>
<rect x="2222.7" y="1010" width="14" height="27.5" fill="#ececec" stroke="#9a9a9a" stroke-width="1.5"/>
<path d="M2228.1 1017 v13 M2231.3 1017 v13" stroke="#555" stroke-width="1.3" fill="none"/>
</svg>
</body></html>
